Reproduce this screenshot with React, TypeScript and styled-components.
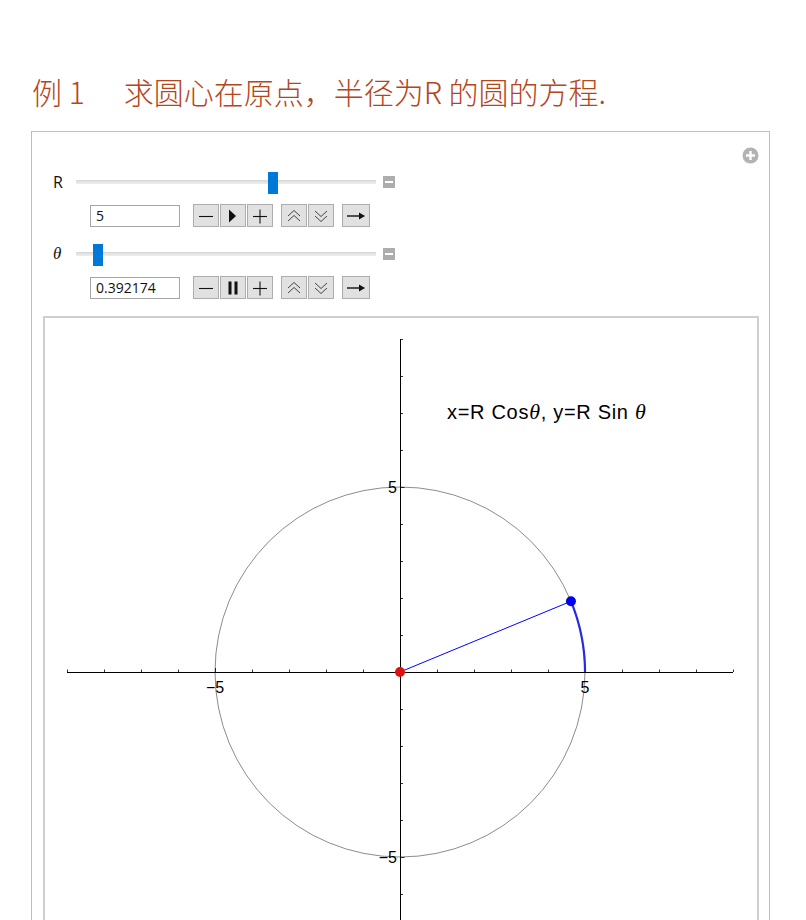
import React from "react";
import styled, { createGlobalStyle } from "styled-components";

const GlobalStyle = createGlobalStyle`
  html, body {
    margin: 0;
    padding: 0;
    background: #ffffff;
  }
  body {
    font-family: "Noto Sans", "Liberation Sans", sans-serif;
  }
`;

const Page = styled.div`
  width: 806px;
  height: 920px;
  overflow: hidden;
`;

const Title = styled.h1`
  margin: 0;
  padding: 73px 0 0 32px;
  height: 58px;
  font-family: "Noto Sans CJK SC", "Noto Sans", sans-serif;
  font-weight: 300;
  font-size: 30px;
  line-height: 36px;
  color: #b5461c;
  white-space: nowrap;
`;

const Gap = styled.span`
  display: inline-block;
  width: 39px;
`;

const Panel = styled.section`
  position: relative;
  margin-left: 31px;
  width: 739px;
  height: 900px;
  border: 1px solid #bdbdbd;
  padding: 39px 0 0 0;
  box-sizing: border-box;
`;

const ExpandIcon = styled.div`
  position: absolute;
  top: 15px;
  right: 10px;
  width: 17px;
  height: 17px;
`;

const Controls = styled.div`
  display: flex;
  flex-direction: column;
  padding-left: 20px;
`;

const SliderRow = styled.div`
  display: flex;
  align-items: center;
  height: 22px;
  margin-bottom: 11px;
`;

const Label = styled.span<{ $italic?: boolean }>`
  width: 23px;
  font-family: ${(p) => (p.$italic ? '"Liberation Serif", serif' : '"Open Sans", "Noto Sans", sans-serif')};
  font-style: ${(p) => (p.$italic ? "italic" : "normal")};
  font-size: ${(p) => (p.$italic ? "17px" : "16px")};
  color: #111;
  padding-left: 1px;
`;

const Track = styled.div`
  position: relative;
  width: 300px;
  height: 4px;
  background: #e4e4e4;
  border-top: 1px solid #d6d6d6;
  border-bottom: 1px solid #ececec;
  box-sizing: border-box;
`;

const Thumb = styled.div`
  position: absolute;
  top: -9px;
  width: 10px;
  height: 22px;
  background: #0078d7;
`;

const Collapse = styled.div`
  margin-left: 7px;
  width: 12px;
  height: 12px;
  background: #adadad;
  display: flex;
  align-items: center;
  justify-content: center;
  &::after {
    content: "";
    width: 8px;
    height: 2px;
    background: #ffffff;
  }
`;

const ButtonRow = styled.div`
  display: flex;
  align-items: center;
  height: 23px;
  padding-left: 38px;
  margin-bottom: 16px;
  &:last-child {
    margin-bottom: 0;
  }
`;

const ValueBox = styled.div`
  width: 90px;
  height: 22px;
  box-sizing: border-box;
  border: 1px solid #a6a6a6;
  background: #fff;
  font-family: "Open Sans", "Noto Sans", sans-serif;
  font-size: 14px;
  line-height: 20px;
  padding-left: 5px;
  color: #111;
  margin-right: 13px;
`;

const ButtonGroup = styled.div`
  display: flex;
  gap: 1px;
  margin-right: 8px;
`;

const Btn = styled.div<{ $wide?: boolean }>`
  width: ${(p) => (p.$wide ? "28px" : "26px")};
  height: 23px;
  box-sizing: border-box;
  border: 1px solid #adadad;
  background: #e1e1e1;
  display: flex;
  align-items: center;
  justify-content: center;
`;

const PlotFrame = styled.div`
  margin: 17px 10px 0 11px;
  height: 640px;
  border: 2px solid #cfcfcf;
  box-sizing: border-box;
`;

type IconKind = "minus" | "play" | "pause" | "plus" | "faster" | "slower" | "dir";

function Glyph({ kind }: { kind: IconKind }) {
  const s = { stroke: "#111", strokeWidth: 1.1, fill: "none" };
  switch (kind) {
    case "minus":
      return (
        <svg width="16" height="16" viewBox="0 0 16 16">
          <line x1="1" y1="8.5" x2="15" y2="8.5" {...s} />
        </svg>
      );
    case "plus":
      return (
        <svg width="16" height="16" viewBox="0 0 16 16">
          <line x1="1" y1="8.5" x2="15" y2="8.5" {...s} />
          <line x1="8" y1="1.5" x2="8" y2="15.5" {...s} />
        </svg>
      );
    case "play":
      return (
        <svg width="16" height="16" viewBox="0 0 16 16">
          <polygon points="4,1.5 11,8 4,14.5" fill="#111" />
        </svg>
      );
    case "pause":
      return (
        <svg width="16" height="16" viewBox="0 0 16 16">
          <rect x="3.5" y="1.5" width="3" height="13" fill="#111" />
          <rect x="9.5" y="1.5" width="3" height="13" fill="#111" />
        </svg>
      );
    case "faster":
      return (
        <svg width="16" height="16" viewBox="0 0 16 16">
          <polyline points="2,8 8,2.5 14,8" stroke="#444" strokeWidth="1" fill="none" />
          <polyline points="2,13 8,7.5 14,13" stroke="#444" strokeWidth="1" fill="none" />
        </svg>
      );
    case "slower":
      return (
        <svg width="16" height="16" viewBox="0 0 16 16">
          <polyline points="2,3 8,8.5 14,3" stroke="#444" strokeWidth="1" fill="none" />
          <polyline points="2,8 8,13.5 14,8" stroke="#444" strokeWidth="1" fill="none" />
        </svg>
      );
    default:
      return (
        <svg width="20" height="16" viewBox="0 0 20 16">
          <line x1="1" y1="8" x2="15" y2="8" stroke="#111" strokeWidth="1.4" />
          <polygon points="13,4.5 19,8 13,11.5" fill="#111" />
        </svg>
      );
  }
}

type ControlProps = {
  label: string;
  italic?: boolean;
  value: string;
  thumbAt: number;
  running?: boolean;
};

function Control({ label, italic, value, thumbAt, running }: ControlProps) {
  return (
    <>
      <SliderRow>
        <Label $italic={italic}>{label}</Label>
        <Track>
          <Thumb style={{ left: thumbAt }} />
        </Track>
        <Collapse />
      </SliderRow>
      <ButtonRow>
        <ValueBox>{value}</ValueBox>
        <ButtonGroup>
          <Btn>
            <Glyph kind="minus" />
          </Btn>
          <Btn>
            <Glyph kind={running ? "pause" : "play"} />
          </Btn>
          <Btn>
            <Glyph kind="plus" />
          </Btn>
        </ButtonGroup>
        <ButtonGroup>
          <Btn>
            <Glyph kind="faster" />
          </Btn>
          <Btn>
            <Glyph kind="slower" />
          </Btn>
        </ButtonGroup>
        <ButtonGroup>
          <Btn $wide>
            <Glyph kind="dir" />
          </Btn>
        </ButtonGroup>
      </ButtonRow>
    </>
  );
}

const R = 5;
const THETA = 0.392174;
const U = 37; // pixels per unit
const OX = 355;
const OY = 354;

function Plot() {
  const px = (x: number) => OX + x * U;
  const py = (y: number) => OY - y * U;
  const bx = px(R * Math.cos(THETA));
  const by = py(R * Math.sin(THETA));
  const xticks: number[] = [];
  for (let i = -9; i <= 9; i++) if (i !== 0) xticks.push(i);
  const yticks: number[] = [];
  for (let i = -8; i <= 9; i++) if (i !== 0) yticks.push(i);

  const arcSteps = 24;
  const arcPts = Array.from({ length: arcSteps + 1 }, (_, k) => {
    const a = (THETA * k) / arcSteps;
    return `${px(R * Math.cos(a)).toFixed(2)},${py(R * Math.sin(a)).toFixed(2)}`;
  }).join(" ");

  const labelStyle = {
    fontFamily: '"Liberation Sans", Arial, sans-serif',
    fontSize: 16,
    fill: "#000",
  } as const;

  return (
    <svg width="712" height="636" viewBox="0 0 712 636">
      <circle cx={OX} cy={OY} r={R * U} fill="none" stroke="#8c8c8c" strokeWidth="1" />
      <line x1={px(-9)} y1={OY + 0.5} x2={px(9)} y2={OY + 0.5} stroke="#000" strokeWidth="1" />
      <line x1={OX + 0.5} y1={py(9)} x2={OX + 0.5} y2={636} stroke="#000" strokeWidth="1" />
      {xticks.map((i) => (
        <line
          key={`x${i}`}
          x1={px(i) + 0.5}
          y1={OY}
          x2={px(i) + 0.5}
          y2={OY - (i % 5 === 0 ? 4 : 2.5)}
          stroke="#000"
          strokeWidth="0.8"
        />
      ))}
      {yticks.map((i) => (
        <line
          key={`y${i}`}
          x1={OX + 0.5}
          y1={py(i) + 0.5}
          x2={OX + 0.5 + (i % 5 === 0 ? 4 : 2.5)}
          y2={py(i) + 0.5}
          stroke="#000"
          strokeWidth="0.8"
        />
      ))}
      <text x={px(5)} y={OY + 21} textAnchor="middle" {...labelStyle}>5</text>
      <text x={px(-5)} y={OY + 21} textAnchor="middle" {...labelStyle}>−5</text>
      <text x={OX - 3} y={py(5) + 6} textAnchor="end" {...labelStyle}>5</text>
      <text x={OX - 3} y={py(-5) + 6} textAnchor="end" {...labelStyle}>−5</text>
      <polyline points={arcPts} fill="none" stroke="#2a2ae0" strokeWidth="2.2" />
      <line x1={OX} y1={OY} x2={bx} y2={by} stroke="#0000ff" strokeWidth="1" />
      <circle cx={OX} cy={OY} r="5" fill="#e01010" />
      <circle cx={bx} cy={by} r="5" fill="#0000ee" />
      <text
        x={402}
        y={101}
        fontFamily='"Liberation Sans", Arial, sans-serif'
        fontSize="20"
        letterSpacing="0.7"
        fill="#000"
      >
        x=R Cos
        <tspan fontFamily='"Liberation Serif", serif' fontStyle="italic" fontSize="22">θ</tspan>
        , y=R Sin{" "}
        <tspan fontFamily='"Liberation Serif", serif' fontStyle="italic" fontSize="22">θ</tspan>
      </text>
    </svg>
  );
}

export default function App() {
  return (
    <Page>
      <GlobalStyle />
      <Title>
        例 1<Gap />求圆心在原点，半径为R 的圆的方程.
      </Title>
      <Panel>
        <ExpandIcon>
          <svg width="17" height="17" viewBox="0 0 17 17">
            <circle cx="8.5" cy="8.5" r="8" fill="#b3b3b3" />
            <rect x="4" y="7.3" width="9" height="2.4" fill="#fff" />
            <rect x="7.3" y="4" width="2.4" height="9" fill="#fff" />
          </svg>
        </ExpandIcon>
        <Controls>
          <Control label="R" value="5" thumbAt={192} />
          <Control label="θ" italic value="0.392174" thumbAt={17} running />
        </Controls>
        <PlotFrame>
          <Plot />
        </PlotFrame>
      </Panel>
    </Page>
  );
}
